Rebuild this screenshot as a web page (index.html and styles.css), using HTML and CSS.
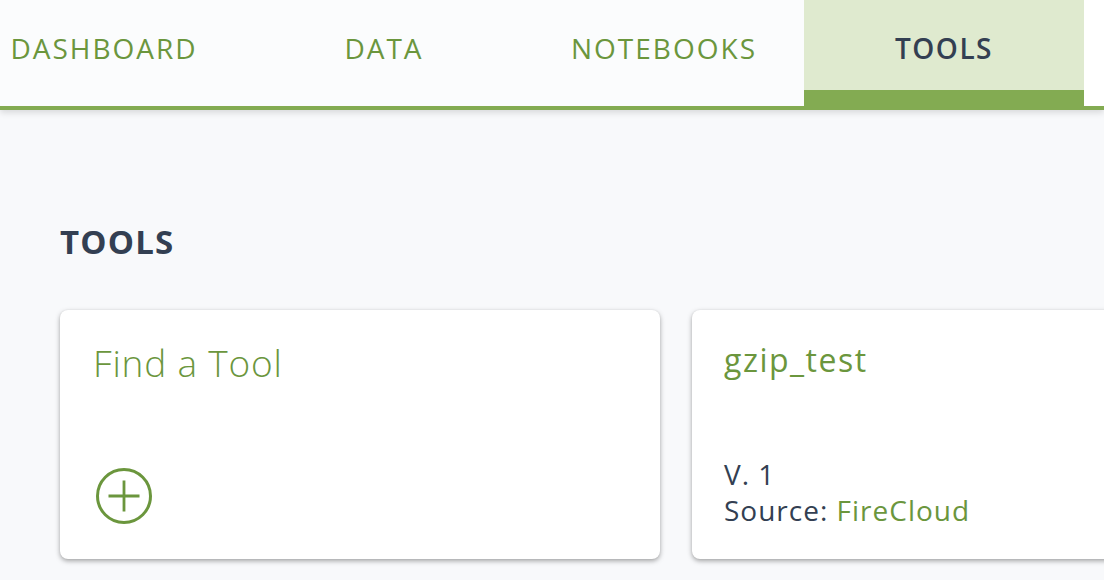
FILE: index.html
```html
<!DOCTYPE html>
<html lang="en">
<head>
<meta charset="utf-8">
<title>Tools</title>
<link rel="stylesheet" href="styles.css">
</head>
<body>
<nav class="nav">
  <div class="tabs">
    <a class="tab">DASHBOARD</a>
    <a class="tab">DATA</a>
    <a class="tab">NOTEBOOKS</a>
    <a class="tab tab-active">TOOLS</a>
    <div class="tab-fill"></div>
  </div>
</nav>
<main class="main">
  <h2 class="heading">TOOLS</h2>
  <div class="cards">
    <div class="card card-find">
      <div class="find-title">Find a Tool</div>
      <svg class="plus" viewBox="0 0 56 56" width="56" height="56" aria-hidden="true">
        <circle cx="28" cy="28" r="26.5" fill="none" stroke="currentColor" stroke-width="3"/>
        <path d="M12.5 28H43.5M28 12.5V43.5" fill="none" stroke="currentColor" stroke-width="2.8"/>
      </svg>
    </div>
    <div class="card card-tool">
      <div class="tool-title">gzip_test</div>
      <div class="tool-meta">
        <div>V. 1</div>
        <div>Source: <span class="green">FireCloud</span></div>
      </div>
    </div>
  </div>
</main>
</body>
</html>
```

FILE: styles.css
```css
* { box-sizing: border-box; }
html, body {
  margin: 0;
  padding: 0;
  overflow: hidden;
}
body {
  background: #f8f9fb;
  font-family: "Open Sans", "Noto Sans", sans-serif;
  color: #333f52;
  width: 1104px;
  height: 580px;
}
.nav {
  height: 110px;
  border-bottom: 4px solid #83ab52;
  background: #fbfcfd;
  box-shadow: 0 3px 6px rgba(0, 0, 0, 0.12);
  position: relative;
  z-index: 1;
}
.tabs {
  display: flex;
  height: 106px;
  margin-left: -36px;
}
.tab {
  flex: 0 0 280px;
  height: 106px;
  padding-bottom: 10px;
  display: flex;
  align-items: center;
  justify-content: center;
  font-size: 28px;
  font-weight: 500;
  letter-spacing: 2px;
  color: #6b963d;
  text-decoration: none;
}
.tab-active {
  background: #dfeacf;
  color: #333f52;
  border-bottom: 16px solid #83ab52;
  padding-top: 6px;
  padding-bottom: 0;
  font-weight: 600;
  letter-spacing: 1.5px;
}
.tab-fill {
  flex: 1;
  background: #ffffff;
}
.main {
  padding-left: 60px;
}
.heading {
  margin: 115px 0 0;
  font-size: 33px;
  line-height: 1;
  font-weight: 700;
  letter-spacing: 1.2px;
}
.cards {
  display: flex;
  gap: 32px;
  margin-top: 52px;
}
.card {
  flex: 0 0 600px;
  height: 249px;
  background: #ffffff;
  border-radius: 8px;
  box-shadow: 0 2px 5px rgba(0, 0, 0, 0.35), 0 0 2px rgba(0, 0, 0, 0.06);
  display: flex;
  flex-direction: column;
}
.card-find {
  padding: 34px 32px 35px 36px;
  color: #6b963d;
}
.find-title {
  font-size: 37px;
  line-height: 1;
  margin-left: -3px;
  font-weight: 300;
  letter-spacing: 0.8px;
}
.plus {
  display: block;
  margin-top: auto;
}
.card-tool {
  padding: 34px 32px 31px 32px;
}
.tool-title {
  font-size: 32px;
  line-height: 1;
  color: #6b963d;
  letter-spacing: 1.5px;
}
.tool-meta {
  margin-top: auto;
  font-size: 28px;
  line-height: 36px;
  letter-spacing: 1px;
}
.green {
  color: #6b963d;
}
```
